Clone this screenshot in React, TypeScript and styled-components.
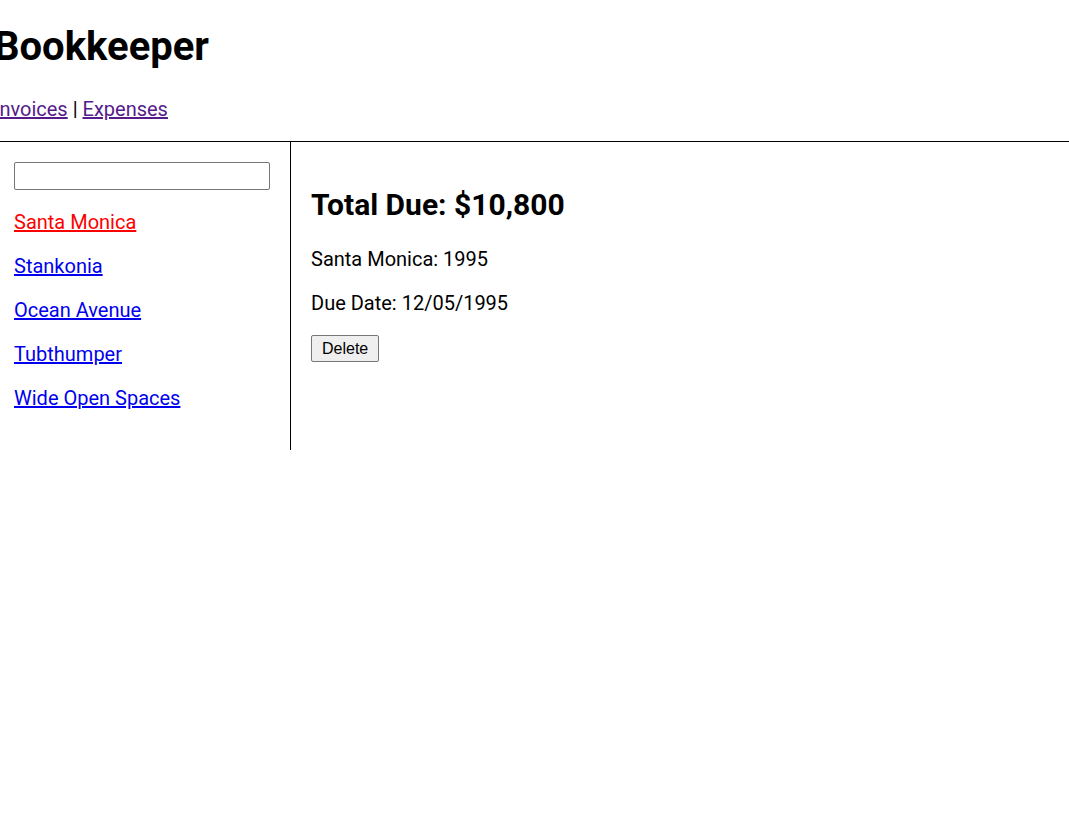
import React, { useState } from 'react';
import styled, { createGlobalStyle } from 'styled-components';

const GlobalStyle = createGlobalStyle`
  html, body {
    margin: 0;
    padding: 0;
    background: #fff;
    overflow: hidden;
  }
  body {
    font-family: Roboto, "Liberation Sans", sans-serif;
    font-size: 20px;
    color: #000;
  }
`;

const Page = styled.div`
  margin-left: -6px;
  padding-top: 23px;
`;

const Title = styled.h1`
  font-size: 40px;
  font-weight: 700;
  margin: 0 0 26.8px 0;
`;

const TopNav = styled.nav`
  border-bottom: solid 1px #000;
  padding-bottom: 20px;
`;

const TopLink = styled.a`
  color: #551a8b;
  text-decoration: underline;
  cursor: pointer;
`;

const Layout = styled.div`
  display: flex;
`;

const Sidebar = styled.nav`
  border-right: solid 1px #000;
  padding: 20px;
  width: 256px;
`;

const Search = styled.input`
  display: block;
  box-sizing: border-box;
  width: 256px;
  height: 28px;
  margin: 0;
  border: 1px solid #767676;
  border-radius: 2px;
  font-family: Roboto, sans-serif;
  font-size: 20px;
`;

const SideLink = styled.a<{ $active?: boolean }>`
  display: block;
  margin: 20px 0;
  color: ${p => (p.$active ? '#ff0000' : '#0000ee')};
  text-decoration: underline;
  cursor: pointer;
`;

const Main = styled.main`
  padding: 20px;
`;

const Total = styled.h2`
  font-size: 30px;
  font-weight: 700;
  margin: 25px 0;
`;

const Line = styled.p`
  margin: 20px 0;
`;

const DeleteButton = styled.button`
  font-family: "Liberation Sans", Arial, sans-serif;
  font-size: 16px;
  height: 27px;
  padding: 1px 10px;
  background: #efefef;
  border: 1px solid #767676;
  border-radius: 2px;
  color: #000;
`;

const invoices = ['Santa Monica', 'Stankonia', 'Ocean Avenue', 'Tubthumper', 'Wide Open Spaces'];

export default function App() {
  const [query, setQuery] = useState('');
  return (
    <>
      <GlobalStyle />
      <Page>
        <Title>Bookkeeper</Title>
        <TopNav>
          <TopLink>Invoices</TopLink> | <TopLink>Expenses</TopLink>
        </TopNav>
        <Layout>
          <Sidebar>
            <Search value={query} onChange={e => setQuery(e.target.value)} />
            {invoices.map((name, i) => (
              <SideLink key={name} $active={i === 0}>{name}</SideLink>
            ))}
          </Sidebar>
          <Main>
            <Total>Total Due: $10,800</Total>
            <Line>Santa Monica: 1995</Line>
            <Line>Due Date: 12/05/1995</Line>
            <DeleteButton>Delete</DeleteButton>
          </Main>
        </Layout>
      </Page>
    </>
  );
}
